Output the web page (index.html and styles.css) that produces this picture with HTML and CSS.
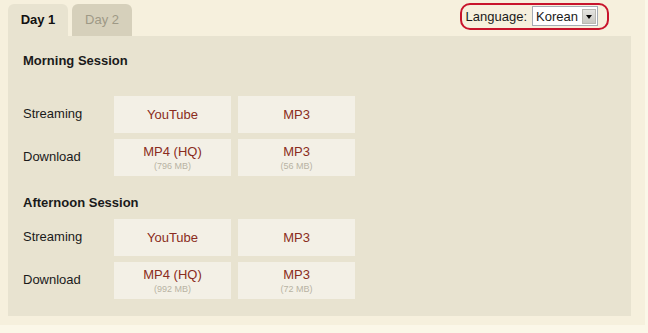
FILE: index.html
```html
<!DOCTYPE html>
<html lang="en">
<head>
    <meta charset="UTF-8">
    <title>Sessions</title>
    <link rel="stylesheet" href="styles.css">
</head>
<body>
<div class="page">
    <div class="top-bar">
        <div class="tabs">
            <div class="tab active">Day 1</div>
            <div class="tab">Day 2</div>
        </div>
        <div class="language">
            <span>Language:</span>
            <div class="select">
                <span class="value">Korean</span>
                <span class="arrow"></span>
            </div>
        </div>
    </div>

    <div class="panel">
        <!-- Morning -->
        <h3 class="session-title morning">Morning Session</h3>
        <div class="media-grid">
            <div class="label">Streaming</div>
            <a class="cell">YouTube</a>
            <a class="cell">MP3</a>

            <div class="label">Download</div>
            <a class="cell">MP4 (HQ)<small>(796 MB)</small></a>
            <a class="cell">MP3<small>(56 MB)</small></a>
        </div>

        <!-- Afternoon -->
        <h3 class="session-title">Afternoon Session</h3>
        <div class="media-grid">
            <div class="label">Streaming</div>
            <a class="cell">YouTube</a>
            <a class="cell">MP3</a>

            <div class="label">Download</div>
            <a class="cell">MP4 (HQ)<small>(992 MB)</small></a>
            <a class="cell">MP3<small>(72 MB)</small></a>
        </div>
    </div>
</div>
</body>
</html>
```

FILE: styles.css
```css
body {
    margin: 0;
    background-color: #fbf7e8;
    font-family: "Liberation Sans", Arial, sans-serif;
    font-size: 13px;
    color: #1a1a1a;
}
.page {
    width: 634px;
    height: 314px;
    padding: 3px 0 8px 8px;
    background-color: #f6f0dd;
    border-right: 3px solid #f6f0dd;
}
.top-bar {
    display: flex;
    justify-content: space-between;
    align-items: flex-start;
    width: 623px;
}
.tabs {
    display: flex;
    gap: 4px;
    padding-top: 1px;
}
.tab {
    width: 60px;
    height: 32px;
    line-height: 32px;
    text-align: center;
    border-radius: 6px 6px 0 0;
    background-color: #d6d0bb;
    color: #9e9986;
}
.tab.active {
    background-color: #e8e3d0;
    color: #111;
    font-weight: bold;
}
.language {
    display: flex;
    align-items: center;
    gap: 5px;
    margin-right: 22px;
    height: 22px;
    padding: 0 9px 1px 4px;
    border: 2px solid #c8142c;
    border-radius: 10px;
}
.select {
    display: flex;
    align-items: center;
    justify-content: space-between;
    width: 64px;
    height: 18px;
    background: #fff;
    border: 1px solid #a5acb5;
}
.select .value {
    padding-left: 3px;
    font-size: 13px;
}
.arrow {
    position: relative;
    width: 14px;
    height: 15px;
    margin-right: 1px;
    background: linear-gradient(#e4e4e0, #c9c8c2);
    border: 1px solid #b9b9b2;
    box-sizing: border-box;
}
.arrow::after {
    content: "";
    position: absolute;
    left: 3px;
    top: 5px;
    border-left: 3.5px solid transparent;
    border-right: 3.5px solid transparent;
    border-top: 4px solid #000;
}
.panel {
    width: 593px;
    height: 249px;
    padding: 17px 15px 14px 15px;
    background-color: #e8e3d0;
}
.session-title {
    margin: 0 0 8px 0;
    font-size: 13px;
    line-height: 16px;
    font-weight: bold;
}
.session-title.morning {
    margin-bottom: 27px;
}
.media-grid {
    display: grid;
    grid-template-columns: 84px 117px 117px;
    grid-auto-rows: 37px;
    column-gap: 7px;
    row-gap: 6px;
    margin-bottom: 19px;
}
.label {
    display: flex;
    align-items: center;
    padding-bottom: 2px;
}
.cell {
    display: flex;
    flex-direction: column;
    align-items: center;
    justify-content: center;
    background-color: #f3f0e6;
    color: #8a2c20;
    line-height: 15px;
    text-decoration: none;
    cursor: pointer;
}
.cell small {
    margin-top: 2px;
    font-size: 9px;
    line-height: 11px;
    color: #b8b3a3;
}
```
